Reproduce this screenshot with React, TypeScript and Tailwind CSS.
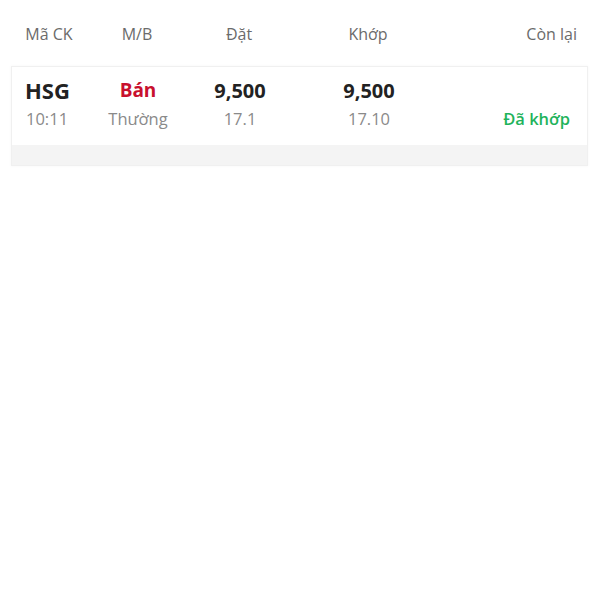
const cols = "grid grid-cols-[98px_78px_126px_132px_1fr] items-center";
const cardCols = "grid grid-cols-[87px_78px_126px_132px_1fr] items-center";

export default function App() {
  return (
    <div className="w-[600px] h-[600px] bg-white font-['Open_Sans','Noto_Sans',sans-serif]">
      <div className={`${cols} h-[66px] pt-[2px] text-[16px] text-[#6b6b6b]`}>
        <div className="text-center">Mã CK</div>
        <div className="text-center">M/B</div>
        <div className="text-center">Đặt</div>
        <div className="text-center">Khớp</div>
        <div className="text-right pr-[23px]">Còn lại</div>
      </div>

      <div className="mx-[11px] w-[577px] border border-[#f0f0f0] shadow-[0_0_3px_rgba(0,0,0,0.04)]">
        <div className="pt-[7px] pb-[16px]">
          <div className={`${cardCols} h-[28px] font-bold`}>
            <div className="pl-[13px] text-[22px] text-[#222]">HSG</div>
            <div className="text-center text-[19px] text-[#c8102e]">Bán</div>
            <div className="text-center text-[20px] text-[#222]">9,500</div>
            <div className="text-center text-[20px] text-[#222]">9,500</div>
            <div />
          </div>
          <div className={`${cardCols} h-[22px] mt-[5px] text-[16.5px] text-[#8a8a8a]`}>
            <div className="pl-[14px]">10:11</div>
            <div className="text-center">Thường</div>
            <div className="text-center">17.1</div>
            <div className="text-center">17.10</div>
            <div className="text-right pr-[17px] text-[16.5px] font-semibold text-[#1fb35b]">Đã khớp</div>
          </div>
        </div>
        <div className="h-[20px] bg-[#f4f4f4]" />
      </div>
    </div>
  );
}
